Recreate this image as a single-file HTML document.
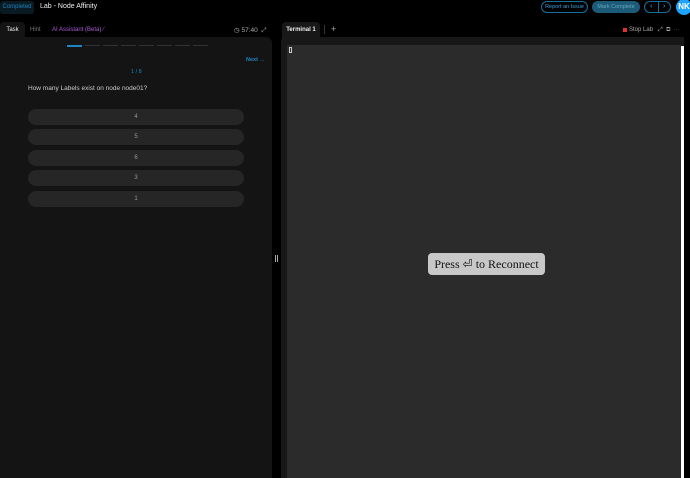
<!DOCTYPE html>
<html><head><style>
*{margin:0;padding:0;box-sizing:border-box}
body{width:690px;height:478px;background:#000;font-family:"Liberation Sans",sans-serif;position:relative;overflow:hidden;color:#ddd}
.a{position:absolute}
.opt{position:absolute;left:28px;width:216px;height:16px;border-radius:8px;background:#262626;color:#999;font-size:6px;text-align:center;line-height:16px}
.seg{position:absolute;top:45px;width:15px;height:1px;background:#333}
</style></head><body>
<div class="a" style="left:0;top:1px;width:34px;height:13px;background:#0a1a22;border-radius:3px;color:#1b86c2;font-size:6px;line-height:13px;text-align:center">Completed</div>
<div class="a" style="left:40px;top:3px;font-size:7px;color:#eee">Lab - Node Affinity</div>
<div class="a" style="left:541px;top:1px;width:47px;height:12px;border:1px solid #1a6e9e;border-radius:6px;color:#3aa0e0;font-size:5.5px;line-height:10px;text-align:center">Report an Issue</div>
<div class="a" style="left:592px;top:1px;width:48px;height:12px;background:#1b5b78;border-radius:6px;color:#6aa6c0;font-size:5.5px;line-height:12px;text-align:center">Mark Complete</div>
<div class="a" style="left:644px;top:1px;width:27px;height:12px;border:1px solid #1a6e9e;border-radius:6px;color:#4ab0f0;font-size:7px;line-height:10px"><span style="position:absolute;left:5px">‹</span><span style="position:absolute;left:13px;top:0;width:1px;height:10px;background:#1a6e9e"></span><span style="position:absolute;left:18px">›</span></div>
<div class="a" style="left:676px;top:-1px;width:16px;height:16px;border-radius:8px;background:#1ea3ff;color:#fff;font-size:8px;font-weight:bold;line-height:16px;text-align:center">NK</div>

<div class="a" style="left:0;top:22px;width:25px;height:16px;background:#141414;border-radius:4px 4px 0 0;color:#eee;font-size:6px;line-height:17px;text-align:center">Task</div>
<div class="a" style="left:30px;top:27px;font-size:6px;color:#777">Hint</div>
<div class="a" style="left:52px;top:27px;font-size:6px;color:#a85ad0">AI Assistant (Beta) ⁄</div>
<div class="a" style="left:234px;top:26px;font-size:6.5px;color:#aaa">◷ 57:40 &nbsp;⤢</div>
<div class="a" style="left:0;top:37px;width:272px;height:441px;background:#141414;border-radius:0 6px 0 0"></div>
<div class="seg" style="left:67px;height:2px;background:#1b86c2"></div>
<div class="seg" style="left:85px"></div><div class="seg" style="left:103px"></div><div class="seg" style="left:121px"></div><div class="seg" style="left:139px"></div><div class="seg" style="left:157px"></div><div class="seg" style="left:175px"></div><div class="seg" style="left:193px"></div>
<div class="a" style="left:246px;top:57px;font-size:5.5px;color:#1b86c2;font-weight:bold">Next →</div>
<div class="a" style="left:131px;top:69px;font-size:5.5px;color:#1b86c2">1 / 8</div>
<div class="a" style="left:28px;top:85px;font-size:6.5px;color:#ccc">How many Labels exist on node node01?</div>
<div class="opt" style="top:109px">4</div>
<div class="opt" style="top:129px">5</div>
<div class="opt" style="top:150px">6</div>
<div class="opt" style="top:170px">3</div>
<div class="opt" style="top:191px">1</div>
<div class="a" style="left:275px;top:255px;width:3px;height:7px;border-left:1px solid #aaa;border-right:1px solid #aaa"></div>

<div class="a" style="left:282px;top:22px;width:38px;height:16px;background:#181818;border-radius:4px 4px 0 0;color:#eee;font-size:6px;font-weight:bold;line-height:17px;text-align:center">Terminal 1</div>
<div class="a" style="left:324px;top:25px;width:1px;height:9px;background:#333"></div>
<div class="a" style="left:331px;top:24px;font-size:9px;color:#aaa">+</div>
<div class="a" style="left:623px;top:28px;width:4px;height:4px;background:#e03030"></div>
<div class="a" style="left:629px;top:27px;font-size:6px;color:#aaa">Stop Lab &nbsp;&nbsp;⤢ &nbsp;⧉ &nbsp;⋯</div>
<div class="a" style="left:281px;top:37px;width:409px;height:441px;background:#181818;border-radius:4px 0 0 0"></div>
<div class="a" style="left:287px;top:45px;width:394px;height:433px;background:#2b2b2b"></div>
<div class="a" style="left:289px;top:47px;width:3px;height:6px;border:1px solid #ccc"></div>
<div class="a" style="left:681px;top:46px;width:3px;height:432px;background:#fff"></div>
<div class="a" style="left:684px;top:37px;width:6px;height:441px;background:#000"></div>
<div class="a" style="left:428px;top:253px;width:117px;height:22px;background:#c8c8c8;border-radius:4px;color:#111;font-family:'Liberation Serif',serif;font-size:12px;line-height:22px;text-align:center">Press ⏎ to Reconnect</div>
</body></html>
